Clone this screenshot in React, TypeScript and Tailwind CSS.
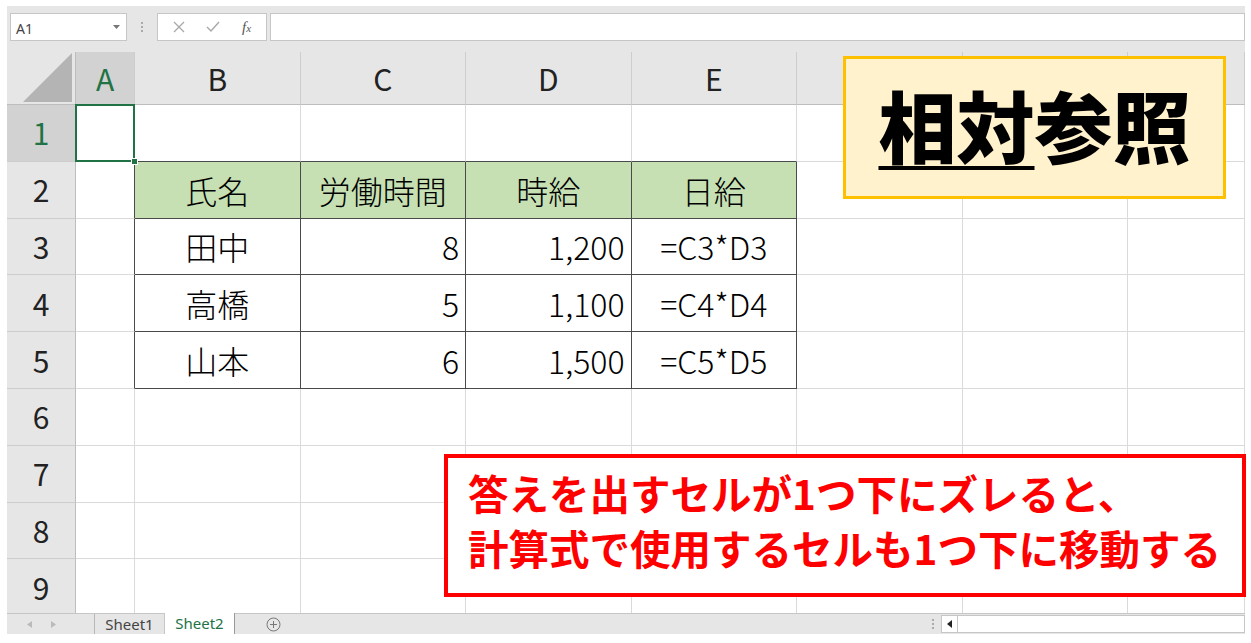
const colW = [
  "w-[59px]",
  "w-[165.5px]",
  "w-[165.5px]",
  "w-[165.5px]",
  "w-[165.5px]",
  "w-[166px]",
  "w-[165px]",
  "w-[117px]",
];
const letters = ["A", "B", "C", "D", "E", "F", "G", "H"];

const data = [
  ["氏名", "労働時間", "時給", "日給"],
  ["田中", "8", "1,200", "=C3*D3"],
  ["高橋", "5", "1,100", "=C4*D4"],
  ["山本", "6", "1,500", "=C5*D5"],
];

function Cell({ r, c }: { r: number; c: number }) {
  const inTable = r >= 2 && r <= 5 && c >= 1 && c <= 4;
  const darkR = inTable || (c === 0 && r >= 2 && r <= 5);
  const darkB = inTable || (r === 1 && c >= 1 && c <= 4);
  const text = inTable ? data[r - 2][c - 1] : "";
  const right = inTable && r > 2 && (c === 2 || c === 3);

  return (
    <div
      className={[
        colW[c],
        "relative shrink-0 h-full border-r border-b border-[#dadada] flex items-center text-[32px] font-light text-black",
        darkR ? "border-r-[#4a4a4a]" : "",
        darkB ? "border-b-[#4a4a4a]" : "",
        inTable && r === 2 ? "bg-[#c6e0b4]" : "",
        right ? "justify-end pr-[6px]" : "justify-center",
      ].join(" ")}
    >
      {text}
      {r === 1 && c === 0 && (
        <div className="absolute -left-px -top-px -right-px -bottom-px border-2 border-[#217346] z-10">
          <div className="absolute -right-[5px] -bottom-[5px] w-[7px] h-[7px] bg-[#217346] border border-white" />
        </div>
      )}
    </div>
  );
}

export default function App() {
  return (
    <div className="relative w-[1251px] h-[643px] overflow-hidden bg-white pt-[6px] px-[6px] font-['Noto_Sans_CJK_JP',sans-serif]">
      {/* formula bar */}
      <div className="h-[46px] bg-[#e6e6e6] flex items-start pt-[7px] pl-[3px] ml-px">
        <div className="w-[117px] h-[28px] bg-white border border-[#c6c6c6] flex items-center justify-between pl-[5px] pr-[6px] text-[14px] text-[#444] font-['Noto_Sans',sans-serif]">
          <span className="mt-[3px]">A1</span>
          <svg width="7" height="4" viewBox="0 0 7 4"><path d="M0 0h7L3.5 4z" fill="#777" /></svg>
        </div>
        <div className="w-[30px] h-[28px] flex flex-col items-center justify-center gap-[2px]">
          <span className="w-[2px] h-[2px] bg-[#aaa]" />
          <span className="w-[2px] h-[2px] bg-[#aaa]" />
          <span className="w-[2px] h-[2px] bg-[#aaa]" />
        </div>
        <div className="w-[110px] h-[28px] bg-white border border-[#c6c6c6] flex items-center justify-around px-[4px]">
          <svg width="12" height="12" viewBox="0 0 12 12"><path d="M1 1l10 10M11 1L1 11" stroke="#a8a8a8" strokeWidth="1.3" /></svg>
          <svg width="14" height="12" viewBox="0 0 14 12"><path d="M1 6l4 4 8-9" stroke="#a8a8a8" strokeWidth="1.4" fill="none" /></svg>
          <span className="font-['Liberation_Serif',serif] italic text-[15px] text-[#555]">
            f<span className="text-[11px]">x</span>
          </span>
        </div>
        <div className="ml-[3px] flex-1 h-[28px] bg-white border border-[#c6c6c6]" />
      </div>

      {/* sheet */}
      <div className="h-[561px] overflow-hidden ml-px">
        <div className="flex h-[53px]">
          <div className="w-[69px] shrink-0 h-full bg-[#e6e6e6] border-r border-b border-[#bdbdbd] relative">
            <svg className="absolute left-[16px] top-[1px]" width="50" height="50" viewBox="0 0 50 50">
              <polygon points="0,49 49,49 49,0" fill="#b4b4b4" />
            </svg>
          </div>
          {letters.map((l, i) => (
            <div
              key={l}
              className={[
                colW[i],
                "shrink-0 h-full border-r border-b border-[#cdcdcd] border-b-[#bdbdbd] flex items-center justify-center text-[30px] font-normal",
                i === 0 ? "bg-[#d2d2d2] text-[#217346]" : "bg-[#e6e6e6] text-[#222]",
              ].join(" ")}
            >
              {l}
            </div>
          ))}
        </div>
        {[1, 2, 3, 4, 5, 6, 7, 8, 9].map((r) => (
          <div key={r} className="flex h-[56.8px]">
            <div
              className={[
                "w-[69px] shrink-0 h-full border-r border-b border-[#bdbdbd] border-b-[#cdcdcd] flex items-center justify-center text-[30px] font-normal",
                r === 1 ? "bg-[#d2d2d2] text-[#217346]" : "bg-[#e6e6e6] text-[#222]",
              ].join(" ")}
            >
              {r}
            </div>
            {letters.map((l, c) => (
              <Cell key={l} r={r} c={c} />
            ))}
          </div>
        ))}
      </div>

      {/* sheet tabs */}
      <div className="h-[21px] bg-[#e6e6e6] border-t border-[#c6c6c6] flex items-stretch ml-px text-[15px] font-['Noto_Sans',sans-serif]">
        <div className="w-[88px] flex items-center gap-[19px] pl-[20px] border-r border-[#b8b8b8]">
          <svg width="5" height="7" viewBox="0 0 5 7"><path d="M5 0v7L0 3.5z" fill="#bbb" /></svg>
          <svg width="5" height="7" viewBox="0 0 5 7"><path d="M0 0v7l5-3.5z" fill="#bbb" /></svg>
        </div>
        <div className="w-[70px] flex items-center justify-center text-[#444] border-r border-[#c6c6c6]">Sheet1</div>
        <div className="w-[70px] flex items-center justify-center text-[#217346] bg-white -mt-px border-r border-[#9a9a9a]">Sheet2</div>
        <div className="w-[76px] flex items-center justify-center">
          <svg width="15" height="15" viewBox="0 0 15 15">
            <circle cx="7.5" cy="7.5" r="6.5" fill="none" stroke="#777" strokeWidth="1" />
            <path d="M7.5 4v7M4 7.5h7" stroke="#777" strokeWidth="1" />
          </svg>
        </div>
        <div className="flex-1" />
        <div className="w-[16px] flex flex-col items-center justify-center gap-[2px]">
          <span className="w-[2px] h-[2px] bg-[#aaa]" />
          <span className="w-[2px] h-[2px] bg-[#aaa]" />
          <span className="w-[2px] h-[2px] bg-[#aaa]" />
        </div>
        <div className="w-[304px] my-[1px] bg-white border border-[#c6c6c6] flex">
          <div className="w-[16px] border-r border-[#c6c6c6] flex items-center justify-center">
            <svg width="5" height="8" viewBox="0 0 5 8"><path d="M5 0v8L0 4z" fill="#222" /></svg>
          </div>
        </div>
      </div>

      {/* title */}
      <div className="absolute left-[843px] top-[56px] w-[383px] h-[143px] bg-[#fff2cc] border-[3px] border-[#ffc000] flex items-center justify-center z-20">
        <span className="text-[78px] leading-none font-black text-black -mt-[8px]">
          <span className="underline decoration-[4px] underline-offset-[8px]">相対</span>参照
        </span>
      </div>

      {/* note */}
      <div className="absolute left-[444px] top-[454px] w-[802px] h-[143px] bg-white border-4 border-[#ff0000] pl-[20px] pt-[7px] z-20">
        <p className="text-[40.5px] leading-[55px] font-bold text-[#ff0000] whitespace-nowrap">
          答えを出すセルが1つ下にズレると、
          <br />
          計算式で使用するセルも1つ下に移動する
        </p>
      </div>
    </div>
  );
}
